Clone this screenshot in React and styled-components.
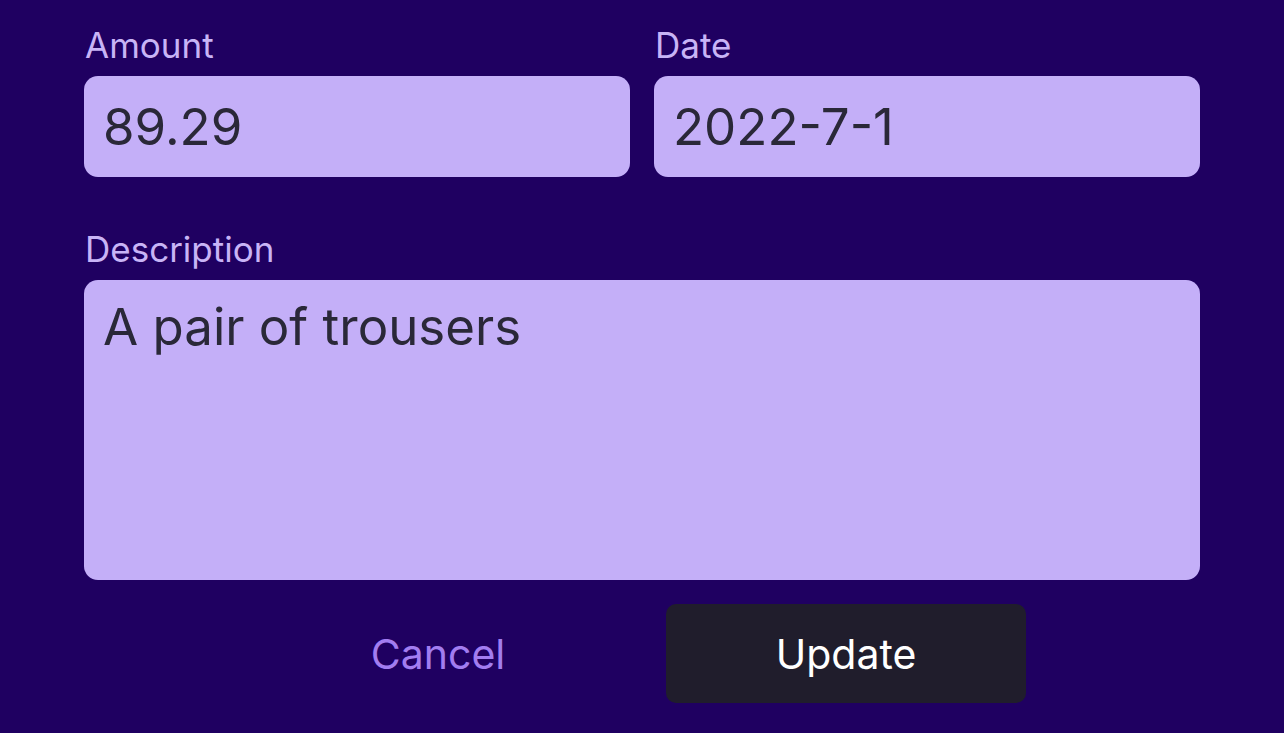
import React from "react";
import styled, { createGlobalStyle } from "styled-components";

const GlobalStyle = createGlobalStyle`
  html, body {
    margin: 0;
    padding: 0;
    background: #1f0061;
  }
  body {
    font-family: Inter, "Noto Sans", sans-serif;
  }
`;

const Page = styled.div`
  box-sizing: border-box;
  width: 100%;
  height: 733px;
  padding: 24px 84px 0;
  background: #1f0061;
  overflow: hidden;
`;

const Form = styled.form`
  display: flex;
  flex-direction: column;
  gap: 24px;
`;

const Row = styled.div`
  display: grid;
  grid-template-columns: 1fr 1fr;
  gap: 24px;
`;

const Field = styled.label`
  display: flex;
  flex-direction: column;
  gap: 10px;
  margin-top: ${(p) => p.$spaced ? "27px" : "0"};
`;

const Label = styled.span`
  font-size: 35px;
  line-height: 42px;
  color: #c8b4f6;
  padding-left: 1px;
`;

const Input = styled.input`
  box-sizing: border-box;
  height: 101px;
  width: 100%;
  border: none;
  border-radius: 14px;
  background: #c4aff8;
  padding: 0 19px;
  font-family: inherit;
  font-size: 51px;
  color: #2a2838;
  outline: none;
`;

const TextArea = styled.textarea`
  box-sizing: border-box;
  height: 300px;
  width: 100%;
  border: none;
  border-radius: 14px;
  background: #c4aff8;
  padding: 16px 19px;
  font-family: inherit;
  font-size: 51px;
  line-height: 62px;
  color: #2a2838;
  resize: none;
  outline: none;
`;

const Actions = styled.div`
  display: flex;
  justify-content: center;
  gap: 48px;
`;

const Button = styled.button`
  width: 360px;
  height: 99px;
  border: none;
  border-radius: 10px;
  font-family: inherit;
  font-size: 41px;
  cursor: pointer;
  background: ${(p) => (p.$primary ? "#201d2c" : "transparent")};
  color: ${(p) => (p.$primary ? "#ffffff" : "#a27df0")};
`;

export default function App() {
  return (
    <Page>
      <GlobalStyle />
      <Form onSubmit={(e) => e.preventDefault()}>
        <Row>
          <Field>
            <Label>Amount</Label>
            <Input defaultValue="89.29" />
          </Field>
          <Field>
            <Label>Date</Label>
            <Input defaultValue="2022-7-1" />
          </Field>
        </Row>
        <Field $spaced>
          <Label>Description</Label>
          <TextArea defaultValue="A pair of trousers" />
        </Field>
        <Actions>
          <Button type="button">Cancel</Button>
          <Button type="submit" $primary>
            Update
          </Button>
        </Actions>
      </Form>
    </Page>
  );
}
